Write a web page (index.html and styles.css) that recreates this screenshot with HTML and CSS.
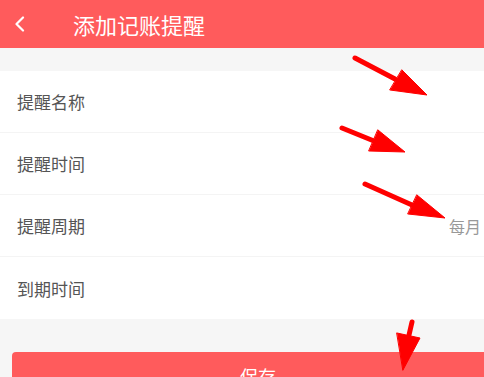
FILE: index.html
```html
<!DOCTYPE html>
<html lang="zh-CN">

<head>
  <meta charset="UTF-8">
  <meta name="viewport" content="width=device-width, initial-scale=1.0">
  <link rel="stylesheet" href="styles.css">
  <title>添加记账提醒</title>
</head>

<body>

  <div class="header">
    <svg class="back-icon" width="12" height="16" viewBox="0 0 12 16">
      <path d="M9 1.5 L2.5 8 L9 14.5" fill="none" stroke="#fff" stroke-width="2.2" stroke-linecap="round" stroke-linejoin="round" />
    </svg>
    <h1 class="title">添加记账提醒</h1>
  </div>

  <!-- 表单 -->
  <div class="form-list">
    <div class="form-row">
      <span class="row-label">提醒名称</span>
    </div>
    <div class="form-row">
      <span class="row-label">提醒时间</span>
    </div>
    <div class="form-row">
      <span class="row-label">提醒周期</span>
      <span class="row-value">每月</span>
    </div>
    <div class="form-row">
      <span class="row-label">到期时间</span>
    </div>
  </div>

  <div class="footer">
    <button class="save-button">保存</button>
  </div>

  <!-- 标注箭头 -->
  <svg class="marks" width="484" height="377" viewBox="0 0 484 377">
    <g fill="#ff0000" stroke="#ff0000" stroke-linecap="round">
      <line x1="355" y1="58" x2="395" y2="79" stroke-width="5" />
      <polygon points="402,70 427,95 390,90" stroke-width="1" />

      <line x1="342" y1="128" x2="374" y2="141" stroke-width="5" />
      <polygon points="378,130 405,152 369,151" stroke-width="1" />

      <line x1="365" y1="184" x2="412" y2="205" stroke-width="5" />
      <polygon points="417,195 445,218 408,214" stroke-width="1" />

      <line x1="412" y1="322" x2="409" y2="335" stroke-width="5" />
      <polygon points="397,333 420,338 403,370" stroke-width="1" />
    </g>
  </svg>

</body>

</html>
```

FILE: styles.css
```css
body {
  margin: 0;
  width: 484px;
  height: 377px;
  overflow: hidden;
  position: relative;
  background-color: #f6f6f6;
  font-family: "Noto Sans CJK SC", "Noto Sans", sans-serif;
}

.header {
  background-color: #ff5b5c;
  height: 48px;
  display: flex;
  align-items: center;
  padding-left: 14px;
}

.back-icon {
  display: block;
}

.title {
  color: white;
  font-size: 22px;
  font-weight: normal;
  margin: 0 0 0 47px;
  line-height: 1;
}

.form-list {
  margin-top: 23px;
  background-color: #fff;
}

.form-row {
  height: 62px;
  display: flex;
  align-items: center;
  justify-content: space-between;
  padding: 0 3px 0 17px;
  border-bottom: 1px solid #f4f4f4;
  box-sizing: border-box;
}

.form-row:last-child {
  border-bottom: none;
}

.row-label {
  font-size: 17px;
  color: #555;
}

.row-value {
  font-size: 16px;
  color: #999;
}

.footer {
  padding: 33px 0 0 12px;
}

.save-button {
  display: block;
  width: 492px;
  height: 48px;
  border: none;
  border-radius: 4px;
  background-color: #ff5b5c;
  color: white;
  font-family: inherit;
  font-size: 18px;
  padding: 0;
}

.marks {
  position: absolute;
  left: 0;
  top: 0;
  pointer-events: none;
}
```
